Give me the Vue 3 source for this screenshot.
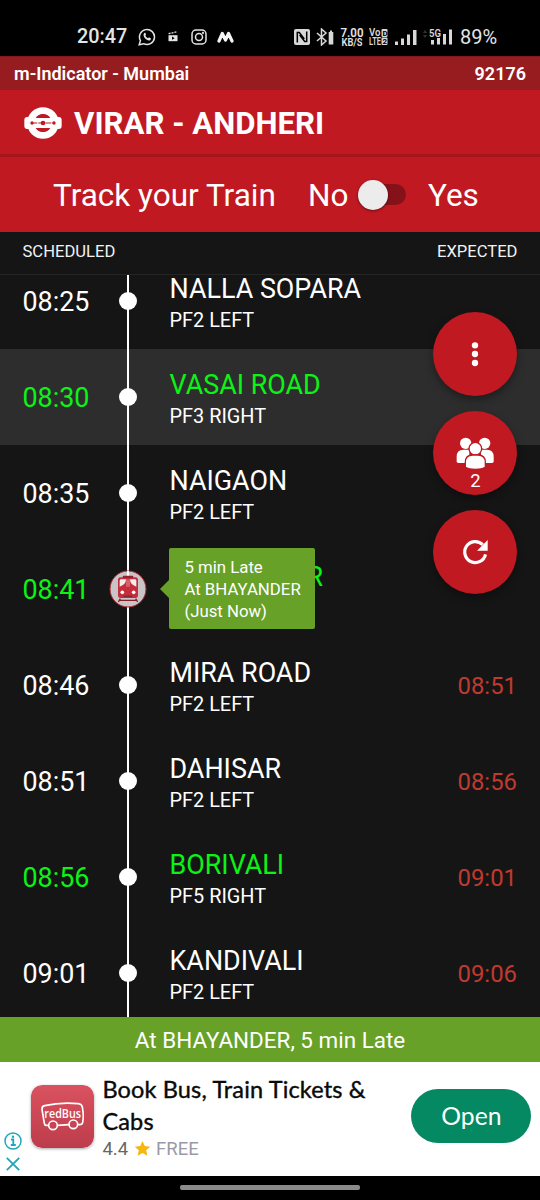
<script setup>
const stations = [
  { time: '08:25', name: 'NALLA SOPARA', pf: 'PF2 LEFT' },
  { time: '08:30', name: 'VASAI ROAD', pf: 'PF3 RIGHT', fast: true, active: true },
  { time: '08:35', name: 'NAIGAON', pf: 'PF2 LEFT' },
  { time: '08:41', name: 'BHAYANDER', pf: '', fast: true, train: true },
  { time: '08:46', name: 'MIRA ROAD', pf: 'PF2 LEFT', expected: '08:51' },
  { time: '08:51', name: 'DAHISAR', pf: 'PF2 LEFT', expected: '08:56' },
  { time: '08:56', name: 'BORIVALI', pf: 'PF5 RIGHT', expected: '09:01', fast: true },
  { time: '09:01', name: 'KANDIVALI', pf: 'PF2 LEFT', expected: '09:06' },
]
</script>

<template>
  <div class="screen">
    <div class="statusbar">
      <span class="clock">20:47</span>
      <svg class="ic-wa" viewBox="0 0 18 18" width="18" height="18">
        <path d="M1.2 16.8l1.2-4.2A7.5 7.5 0 1 1 5.6 15.700z" fill="none" stroke="#e4e4e4" stroke-width="1.5" />
        <path d="M6.300 4.900c.5-.4.9-.2 1.100.2l.6 1.400c.1.400-.6 1-.6 1.200.6 1.300 1.500 2 2.700 2.500.3 0 .7-1 1.100-.8l1.500.8c.5.3.2 1.300-.300 1.700-1.500 1.300-3.700.1-5.200-1.400S4.800 6.400 6.300 4.900z" fill="#e4e4e4" />
      </svg>
      <svg class="ic-clap" viewBox="0 0 10 11" width="10" height="11">
        <path d="M.5 4.200h9v6h-9z" fill="#e4e4e4" /><path d="M.6 2.700L8.800.8" stroke="#e4e4e4" stroke-width="1.300" stroke-dasharray="2 1" />
        <path d="M4 5.600v3.200l2.700-1.600z" fill="#000" />
      </svg>
      <svg class="ic-ig" viewBox="0 0 16 16" width="16" height="16" fill="none" stroke="#e4e4e4" stroke-width="1.500">
        <rect x="1" y="1" width="14" height="14" rx="4" /><circle cx="8" cy="8" r="3.500" /><circle cx="12" cy="4" r=".4" />
      </svg>
      <svg class="ic-m" viewBox="0 0 17 12" width="17" height="12">
        <path d="M2 10L5.300 2.500l3.200 6.500 3-6.500 3.500 7.500" fill="none" stroke="#f4f4f4" stroke-width="3.200" stroke-linejoin="round" stroke-linecap="round" />
      </svg>
      <div class="right-icons">
        <svg viewBox="0 0 16 16" width="16" height="16">
          <rect width="16" height="16" rx="2" fill="#d8d8d8" />
          <path d="M3.300 13.500V3.500h2l5 6.500M12.700 2.500v10h-2l-5-6.500" fill="none" stroke="#000" stroke-width="1.500" />
        </svg>
        <svg class="ic-bt" viewBox="0 0 18 18" width="18" height="18">
          <path d="M1 5l9 8-4.500 4V1L10 5l-9 8" fill="none" stroke="#d8d8d8" stroke-width="1.500" />
          <path d="M12.700 4h1.300V2.500h2V4h1.300v12.500h-4.600z" fill="#d8d8d8" />
        </svg>
        <svg class="speed" viewBox="0 0 24 20" width="24" height="20" fill="#e4e4e4">
          <text x=".5" y="9.500" class="s1" textLength="23" lengthAdjust="spacingAndGlyphs">7.00</text>
          <text x="1.500" y="19" class="s2" textLength="21" lengthAdjust="spacingAndGlyphs">KB/S</text>
        </svg>
        <svg class="ic-volte" viewBox="0 0 19 18" width="19" height="18">
          <rect x="12.500" y="1" width="6" height="8" rx="1" fill="#d8d8d8" /><rect x="12.500" y="9.500" width="6" height="7.500" rx="1" fill="#d8d8d8" />
          <text x="0" y="8.300" class="vt" textLength="11.500" lengthAdjust="spacingAndGlyphs">Vo</text><text x="13.500" y="7.500" class="vd">D</text>
          <text x="0" y="17" class="vt" textLength="12" lengthAdjust="spacingAndGlyphs">LTE</text><text x="13.600" y="15.800" class="vd">2</text>
        </svg>
        <svg class="ic-sig" viewBox="0 0 22 16" width="22" height="16" fill="#d8d8d8">
          <path d="M0 12.500h3V16H0zM6 9.500h3V16H6zM12 5.500h3V16h-3zM18 1h3.500v15H18z" />
        </svg>
        <svg class="ic-5g" viewBox="0 0 30 17" width="30" height="17" fill="#d8d8d8">
          <path d="M0 5l2-3 2 3zM0 7l2 3 2-3z" fill="#333" />
          <text x="6" y="8.500" class="g5" textLength="12" lengthAdjust="spacingAndGlyphs">5G</text>
          <path d="M8 12h3v4.500H8zM14 10h3v6.500h-3zM20 6h3v10.500h-3zM26 1.500h3v15h-3z" />
        </svg>
        <span class="batt">89%</span>
      </div>
    </div>

    <div class="appbar"><span>m-Indicator - Mumbai</span><span>92176</span></div>

    <div class="titlebar">
      <svg viewBox="0 0 114 96" width="38" height="32">
        <circle cx="57" cy="48" r="37" fill="none" stroke="#fff" stroke-width="21" />
        <path d="M10 30h94q9 0 9 9v18q0 9-9 9H10q-9 0-9-9V39q0-9 9-9z" fill="#fff" />
        <path d="M35 33a26 26 0 0 1 44 0zM35 63a26 26 0 0 0 44 0z" fill="#c01922" />
        <path d="M22 48h70" stroke="#c01922" stroke-width="3.500" stroke-dasharray="18 3" />
        <g fill="#c01922"><circle cx="24" cy="48" r="5" /><circle cx="57" cy="48" r="7" /><circle cx="90" cy="48" r="5" /></g>
      </svg>
      <h1>VIRAR - ANDHERI</h1>
    </div>

    <div class="track">
      <span class="t-label">Track your Train</span>
      <span class="t-no">No</span>
      <span class="switch"><span class="knob"></span></span>
      <span class="t-yes">Yes</span>
    </div>

    <div class="cols"><span>SCHEDULED</span><span>EXPECTED</span></div>

    <div class="list-wrap">
      <div class="list">
        <div v-for="s in stations" :key="s.name" class="row" :class="{ fast: s.fast, active: s.active }">
          <div class="time">{{ s.time }}</div>
          <div class="rail">
            <svg v-if="s.train" class="train" viewBox="0 0 114 114" width="38" height="38">
              <circle cx="57" cy="57" r="54" fill="#c9c5c6" stroke="#a92731" stroke-width="3" />
              <path d="M57 3v17" stroke="#fff" stroke-width="6" />
              <path d="M34 86l-6 10M80 86l6 10M32 91h50" stroke="#84202a" stroke-width="4" fill="none" />
              <rect x="27" y="22" width="60" height="62" rx="8" fill="#c52d3a" />
              <rect x="41" y="17" width="32" height="7" rx="3" fill="#8d2630" />
              <path d="M32 50V32q0-4 5-4h14q0 16-19 22zM82 50V32q0-4-5-4H63q0 16 19 22z" fill="#f0eeee" />
              <path d="M51 28h12v22H51z" fill="#d5606a" />
              <circle cx="40" cy="67" r="5.500" fill="#fff" /><circle cx="74" cy="67" r="5.500" fill="#fff" />
              <path d="M44 79h26" stroke="#842530" stroke-width="4" />
            </svg>
            <span v-else class="dot"></span>
          </div>
          <div class="info">
            <div class="name">{{ s.name }}</div>
            <div class="pf">{{ s.pf }}</div>
            <div v-if="s.train" class="tip">5 min Late<br />At BHAYANDER<br />(Just Now)</div>
          </div>
          <div class="exp">{{ s.expected }}</div>
        </div>
      </div>
      <div class="fabs">
        <div class="fab">
          <svg viewBox="0 0 252 252" fill="#fff"><circle cx="126" cy="100" r="9.500" /><circle cx="126" cy="126" r="9.500" /><circle cx="126" cy="153" r="9.500" /></svg>
        </div>
        <div class="fab">
          <svg viewBox="0 0 252 252" fill="#fff">
            <circle cx="98" cy="97" r="17" /><circle cx="155" cy="97" r="17" />
            <path d="M71 152v-15q0-21 20-21h18v40H82q-11 0-11-4zM182 152v-15q0-21-20-21h-18v40h27q11 0 11-4z" />
            <circle cx="127" cy="113" r="19" stroke="#c01922" stroke-width="4" />
            <path d="M97 169v-15q0-22 22-22h16q22 0 22 22v15q-10 6-30 6t-30-6z" stroke="#c01922" stroke-width="4" />
          </svg>
          <span class="count">2</span>
        </div>
        <div class="fab">
          <svg viewBox="0 0 252 252"><path d="M157.500 133A31.500 31.500 0 1 1 149 104" fill="none" stroke="#fff" stroke-width="9.500" /><path d="M164 90v32h-32z" fill="#fff" /></svg>
        </div>
      </div>
    </div>

    <div class="banner">At BHAYANDER, 5 min Late</div>

    <div class="ad">
      <div class="adchoice">
        <svg viewBox="0 0 18 18" width="18" height="18"><circle cx="9" cy="9" r="8" fill="none" stroke="#1fa6bd" stroke-width="1.500" /><path d="M7 7.500h2.300v5.500M6.800 13h5" fill="none" stroke="#1fa6bd" stroke-width="1.800" /><circle cx="9" cy="4.800" r="1.200" fill="#1fa6bd" /></svg>
        <svg viewBox="0 0 14 14" width="14" height="14"><path d="M.8.8l12.400 12.400M13.200.8L.8 13.200" stroke="#1fa6bd" stroke-width="1.800" /></svg>
      </div>
      <svg class="redbus" viewBox="0 0 189 189" width="63" height="63">
        <defs><linearGradient id="rb" x1="0" y1="0" x2="0" y2="1"><stop offset="0" stop-color="#da5260" /><stop offset="1" stop-color="#bd3c4b" /></linearGradient></defs>
        <rect width="189" height="189" rx="34" fill="url(#rb)" />
        <path d="M52 121h-6q-5 0-6-6l-7-42q-1-9 8-11Q88 51 142 56q10 1 12 10 5 28 1 46-1 7-9 7h-5M80 121l33-2" fill="none" stroke="#fff" stroke-width="5" stroke-linecap="round" />
        <circle cx="66" cy="121" r="13" fill="none" stroke="#fff" stroke-width="5" /><circle cx="127" cy="118" r="13" fill="none" stroke="#fff" stroke-width="5" />
        <text x="40" y="98" textLength="110" lengthAdjust="spacingAndGlyphs" class="rbt">redBus</text>
      </svg>
      <div class="adtext">
        <div class="adtitle">Book Bus, Train Tickets &amp;<br />Cabs</div>
        <div class="admeta">
          <span class="rate">4.4</span>
          <svg viewBox="0 0 24 24" width="17" height="17"><path d="M12 1.500l3.200 7.100 7.800.8-5.800 5.200 1.700 7.700L12 18.300l-6.900 4 1.700-7.700L1 9.400l7.800-.8z" fill="#f6b70e" /></svg>
          <span class="free">FREE</span>
        </div>
      </div>
      <div class="open">Open</div>
    </div>

    <div class="nav"><span></span></div>
  </div>
</template>

<style>
body { background: #000; }
</style>

<style scoped>
.screen { width: 540px; height: 1200px; overflow: hidden; display: flex; flex-direction: column; background: #151515; color: #fff; font-family: Roboto, sans-serif; }
.screen > div { flex: none; box-sizing: border-box; white-space: nowrap; }
svg { display: block; flex: none; }
.statusbar { height: 56px; background: #000; padding: 17px 44px 0 77px; display: flex; align-items: center; color: #e4e4e4; }
.clock { font-size: 19.800px; font-weight: 500; width: 60.500px; line-height: 40px; }
.ic-clap { margin-left: 12px; }
.ic-ig { margin-left: 13px; }
.ic-m { margin-left: 10px; }
.right-icons { margin-left: auto; display: flex; align-items: center; }
.ic-bt { margin-left: 6px; }
.speed { margin-left: 6px; }
.s1 { font-size: 12.500px; font-weight: 600; }
.s2 { font-size: 10px; font-weight: 600; }
.ic-volte { margin-left: 5px; }
.vt { font-size: 10px; font-weight: 600; fill: #d8d8d8; }
.vd { font-size: 8px; font-weight: 700; fill: #000; }
.g5 { font-size: 11px; font-weight: 600; }
.ic-sig { margin-left: 7px; }
.ic-5g { margin-left: 6px; }
.batt { font-size: 20px; margin-left: 7px; width: 36px; line-height: 40px; }

.appbar { height: 34px; border-top: 1px solid #7f171b; background: #971c20; padding: 0 14px; display: flex; justify-content: space-between; font-size: 18px; line-height: 33px; font-weight: 600; }
.titlebar { height: 67px; background: #c01922; border-bottom: 3px solid #a3161d; display: flex; align-items: center; padding: 2px 24px 0; gap: 12px; }
.titlebar h1 { margin: 2px 0 0; font-size: 31.200px; font-weight: 700; line-height: 40px; }
.track { height: 75px; background: #c01922; display: flex; align-items: center; padding: 2px 0 0 53px; font-size: 31.500px; }
.t-label { width: 255px; }
.t-no { width: 50px; }
.switch { width: 48px; height: 21px; border-radius: 11px; background: linear-gradient(90deg, #c01922 10px, #851218 10px); position: relative; top: -1px; }
.knob { position: absolute; left: 0; top: -4.500px; width: 30px; height: 30px; border-radius: 50%; background: #ececec; box-shadow: 0 1px 3px rgba(0, 0, 0, .45); }
.t-yes { margin-left: 22px; }
.cols { height: 43px; border-bottom: 1px solid #242424; display: flex; justify-content: space-between; padding: 0 22.500px; font-size: 16.600px; line-height: 39px; color: #f2f2f2; }

.list-wrap { height: 742px; position: relative; overflow: hidden; }
.list { margin-top: -22.500px; }
.row { height: 96px; display: grid; grid-template-columns: 108px 40px 1fr 120px; grid-template-rows: 96px; }
.row.active { background: #2d2d2d; }
.time { padding-left: 22.500px; font-size: 26.900px; line-height: 98px; }
.fast .time, .fast .name { color: #0bf317; }
.rail { position: relative; display: flex; align-items: center; justify-content: center; }
.rail::before { content: ''; position: absolute; left: 19px; top: 0; width: 2px; height: 97px; background: #fff; }
.dot { position: relative; width: 18px; height: 18px; border-radius: 50%; background: #fff; }
.train { position: relative; }
.info { position: relative; padding: 20px 0 0 21.500px; }
.name { font-size: 26.900px; line-height: 32px; }
.pf { font-size: 19.900px; line-height: 31px; }
.exp { padding-right: 23px; text-align: right; font-size: 23.900px; line-height: 98px; color: #c03a2f; }
.tip { position: absolute; left: 21.400px; top: 7.500px; width: 146px; height: 81px; box-sizing: border-box; padding: 8px 0 0 15px; border-radius: 2px; background: #68a128; font-size: 16.800px; line-height: 22px; }
.tip::before { content: ''; position: absolute; left: -9px; top: 31.500px; border: solid transparent; border-width: 9px 9px 9px 0; border-right-color: #68a128; }
.fabs { position: absolute; right: 22.600px; top: 37.400px; display: flex; flex-direction: column; gap: 15px; }
.fab { width: 84px; height: 84px; border-radius: 50%; background: #c01922; position: relative; box-shadow: 0 4px 9px rgba(0, 0, 0, .35); }
.count { position: absolute; left: 0; right: 0; bottom: 3px; text-align: center; font-size: 18.500px; line-height: 22px; }

.banner { height: 45px; background: #68a128; text-align: center; font-size: 22.450px; line-height: 47px; }
.ad { height: 114px; background: #fff; display: flex; padding: 0 8.600px 0 4px; }
.adchoice { width: 27.400px; padding-top: 70px; display: flex; flex-direction: column; gap: 7px; }
.adchoice svg:last-child { margin-left: 2px; }
.redbus { margin-top: 23px; border-radius: 11px; box-shadow: 0 1px 3px rgba(0, 0, 0, .35); }
.rbt { font: 600 38px "Open Sans", sans-serif; fill: #fff; }
.adtext { margin-left: 8px; flex: 1; padding-top: 10.500px; }
.adtitle { font-family: Lato, sans-serif; font-size: 23.500px; letter-spacing: .15px; -webkit-text-stroke: .4px #0a0a0a; line-height: 32px; color: #0a0a0a; }
.admeta { display: flex; align-items: center; font-size: 18.500px; line-height: 24px; color: #666; }
.admeta svg { margin: 0 5px 0 6px; }
.free { color: #9a9aa5; }
.open { width: 120px; height: 54px; border-radius: 27px; background: #048962; margin-top: 27.400px; text-align: center; line-height: 54px; font-size: 24.700px; font-family: Lato, sans-serif; }
.nav { height: 24px; background: #000; padding-top: 9px; }
.nav span { display: block; width: 180px; height: 5px; margin: 0 auto; border-radius: 2px; background: #8c8c8c; }
</style>
